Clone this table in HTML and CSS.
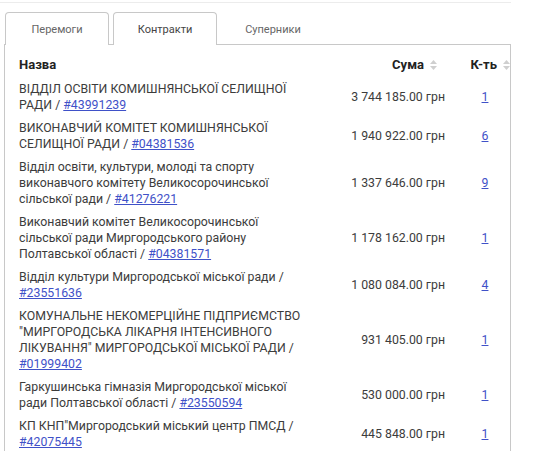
FILE: index.html
```html
<!DOCTYPE html>
<html lang="uk">
<head>
<meta charset="utf-8">
<link rel="stylesheet" href="styles.css">
</head>
<body>
<div class="page">
  <div class="topline"></div>
  <div class="tabs">
    <div class="tab">Перемоги</div>
    <div class="tab active">Контракти</div>
    <div class="tab plain">Суперники</div>
  </div>
  <div class="panel">
    <div class="grid">
      <div class="th name">Назва</div>
      <div class="th sum">Сума <svg class="sort" viewBox="0 0 7 10" width="7" height="10"><path d="M3.5 0L7 4H0z M3.5 10L0 6h7z" fill="#cfcfcf"/></svg></div>
      <div class="th cnt">К-ть <svg class="sort" viewBox="0 0 7 10" width="7" height="10"><path d="M3.5 0L7 4H0z M3.5 10L0 6h7z" fill="#cfcfcf"/></svg></div>

      <div class="td name">ВІДДІЛ ОСВІТИ КОМИШНЯНСЬКОЇ СЕЛИЩНОЇ РАДИ / <a href="#">#43991239</a></div>
      <div class="td sum">3 744 185.00 грн</div>
      <div class="td cnt"><a href="#">1</a></div>

      <div class="td name">ВИКОНАВЧИЙ КОМІТЕТ КОМИШНЯНСЬКОЇ СЕЛИЩНОЇ РАДИ / <a href="#">#04381536</a></div>
      <div class="td sum">1 940 922.00 грн</div>
      <div class="td cnt"><a href="#">6</a></div>

      <div class="td name">Відділ освіти, культури, молоді та спорту виконавчого комітету Великосорочинської сільської ради / <a href="#">#41276221</a></div>
      <div class="td sum">1 337 646.00 грн</div>
      <div class="td cnt"><a href="#">9</a></div>

      <div class="td name">Виконавчий комітет Великосорочинської сільської ради Миргородського району Полтавської області / <a href="#">#04381571</a></div>
      <div class="td sum">1 178 162.00 грн</div>
      <div class="td cnt"><a href="#">1</a></div>

      <div class="td name">Відділ культури Миргородської міської ради / <a href="#">#23551636</a></div>
      <div class="td sum">1 080 084.00 грн</div>
      <div class="td cnt"><a href="#">4</a></div>

      <div class="td name">КОМУНАЛЬНЕ НЕКОМЕРЦІЙНЕ ПІДПРИЄМСТВО "МИРГОРОДСЬКА ЛІКАРНЯ ІНТЕНСИВНОГО ЛІКУВАННЯ" МИРГОРОДСЬКОЇ МІСЬКОЇ РАДИ / <a href="#">#01999402</a></div>
      <div class="td sum">931 405.00 грн</div>
      <div class="td cnt"><a href="#">1</a></div>

      <div class="td name">Гаркушинська гімназія Миргородської міської ради Полтавської області / <a href="#">#23550594</a></div>
      <div class="td sum">530 000.00 грн</div>
      <div class="td cnt"><a href="#">1</a></div>

      <div class="td name">КП КНП"Миргородський міський центр ПМСД / <a href="#">#42075445</a></div>
      <div class="td sum">445 848.00 грн</div>
      <div class="td cnt"><a href="#">1</a></div>
    </div>
  </div>
</div>
</body>
</html>
```

FILE: styles.css
```css
html, body {
  margin: 0;
  padding: 0;
  background: #fff;
}
body {
  font-family: Roboto, "Noto Sans", sans-serif;
  color: #3c3c3c;
}
.page {
  width: 511px;
  padding-top: 2px;
}
.topline {
  border-top: 1px solid #ececec;
  height: 0;
}
.tabs {
  display: flex;
  gap: 4px;
  margin-top: 9px;
  padding-left: 5px;
  position: relative;
  z-index: 1;
  margin-bottom: -1px;
}
.tab {
  width: 102px;
  height: 32px;
  border: 1px solid #c8c8c8;
  border-bottom: none;
  border-radius: 4px 4px 0 0;
  background: #fff;
  font-size: 11px;
  color: #666;
  display: flex;
  align-items: center;
  justify-content: center;
}
.tab.active {
  color: #444;
}
.tab.plain {
  border-color: transparent;
  background: transparent;
  color: #666;
}
.panel {
  margin-left: 4px;
  border: 1px solid #c8c8c8;
  border-bottom: none;
  height: 420px;
  box-sizing: border-box;
  padding: 12px 0 0 14px;
}
.grid {
  display: grid;
  grid-template-columns: 283px 143px 66px;
  font-size: 12.3px;
  line-height: 16px;
}
.th {
  font-size: 13px;
  font-weight: 700;
  color: #222;
  padding-bottom: 4px;
  display: flex;
  align-items: center;
  gap: 6px;
}
.th.sum {
  justify-content: flex-end;
  padding-right: 8px;
}
.th.cnt {
  justify-content: flex-end;
  padding-right: 1px;
}
.sort {
  display: block;
}
.td {
  padding: 3.5px 0;
  align-self: center;
}
.td.name {
  align-self: start;
}
.td.sum {
  text-align: right;
}
.td.cnt {
  text-align: center;
  padding-left: 14px;
}
a {
  color: #3f51c8;
  text-decoration: underline;
}
```
